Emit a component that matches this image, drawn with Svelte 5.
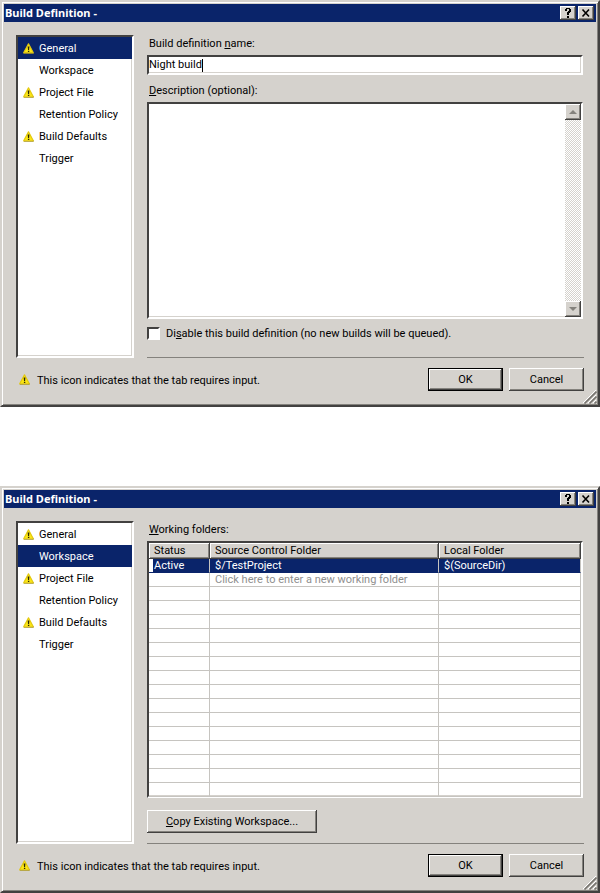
<script lang="ts">
  const tabs = [
    { name: 'General', warn: true },
    { name: 'Workspace', warn: false },
    { name: 'Project File', warn: true },
    { name: 'Retention Policy', warn: false },
    { name: 'Build Defaults', warn: true },
    { name: 'Trigger', warn: false },
  ]

  // The grid always shows empty rows below the last folder
  const blankRows = 15

  let name = $state('Night build')
  let description = $state('')
  let disabled = $state(false)
</script>

{#snippet warnIcon()}
  <svg class="warn" viewBox="0 0 11 11" width="11" height="11" aria-hidden="true">
    <path d="M5.5 0.8 L10.3 9.8 H0.7 Z" fill="#fbe714" stroke="#e3c810" stroke-width="1.2" stroke-linejoin="round" />
    <path d="M0.8 10.5 H10.4 L10.7 9.4" fill="none" stroke="#a08e2c" stroke-width="0.6" />
    <path d="M4.7 3.4 H6.4 L6.1 7 H5 Z M4.9 7.8 H6.3 V9.1 H4.9 Z" fill="#2b2606" />
  </svg>
{/snippet}

{#snippet dialog(selected, body)}
  <section class="dialog">
    <header class="titlebar">
      <h1>Build Definition -</h1>
      <button class="caption" aria-label="Help">
        <svg viewBox="0 0 12 10" width="12" height="10" shape-rendering="crispEdges">
          <path d="M4 0h4v1h1v3h-1v1h-1v2h-2v-3h1v-1h1v-2h-2v2h-2v-2h1z M5 8h2v2h-2z" />
        </svg>
      </button>
      <button class="caption" aria-label="Close">
        <svg viewBox="0 0 12 10" width="12" height="10">
          <path d="M2.5 1.5 L9 8.5 M9 1.5 L2.5 8.5" stroke="#000" stroke-width="1.6" />
        </svg>
      </button>
    </header>

    <div class="content">
      <ul class="tabs">
        {#each tabs as tab}
          <li>
            <button class="tab" class:selected={tab.name === selected}>
              <span class="slot">{#if tab.warn}{@render warnIcon()}{/if}</span>
              <span class="tab-name">{tab.name}</span>
            </button>
          </li>
        {/each}
      </ul>
      <div class="pane">
        {@render body()}
      </div>
    </div>

    <footer>
      <p class="note">
        {@render warnIcon()}
        <span>This icon indicates that the tab requires input.</span>
      </p>
      <button class="push default">OK</button>
      <button class="push">Cancel</button>
    </footer>

    <svg class="grip" viewBox="0 0 14 14" width="14" height="14" aria-hidden="true">
      <path d="M0 13 L13 0 M5 13 L13 5 M10 13 L13 10" stroke="#fff" />
      <path d="M1.5 13.5 L13.5 1.5 M6.5 13.5 L13.5 6.5 M11.5 13.5 L13.5 11.5" stroke="#77746f" stroke-width="1.6" />
    </svg>
  </section>
{/snippet}

{#snippet general()}
  <label class="caption-text" for="def-name">Build definition <u>n</u>ame:</label>
  <div class="sunken field">
    <input id="def-name" type="text" size="9" bind:value={name} />
    <span class="caret"></span>
  </div>

  <label class="caption-text desc-label" for="def-desc"><u>D</u>escription (optional):</label>
  <div class="sunken memo">
    <textarea id="def-desc" bind:value={description}></textarea>
    <div class="scrollbar">
      <button aria-label="Scroll up">
        <svg viewBox="0 0 8 4" width="8" height="4"><path d="M4 0 L8 4 H0 Z" /></svg>
      </button>
      <button aria-label="Scroll down">
        <svg viewBox="0 0 8 4" width="8" height="4"><path d="M0 0 H8 L4 4 Z" /></svg>
      </button>
    </div>
  </div>

  <label class="check">
    <input type="checkbox" bind:checked={disabled} />
    <span>Di<u>s</u>able this build definition (no new builds will be queued).</span>
  </label>
{/snippet}

{#snippet workspace()}
  <div class="caption-text" id="folders-label"><u>W</u>orking folders:</div>
  <div class="sunken grid">
    <table aria-labelledby="folders-label">
      <thead>
        <tr>
          <th class="status">Status</th>
          <th class="source">Source Control Folder</th>
          <th>Local Folder</th>
        </tr>
      </thead>
      <tbody>
        <tr class="current">
          <td>Active</td>
          <td>$/TestProject</td>
          <td>$(SourceDir)</td>
        </tr>
        <tr class="hint">
          <td></td>
          <td>Click here to enter a new working folder</td>
          <td></td>
        </tr>
        {#each { length: blankRows } as _}
          <tr><td></td><td></td><td></td></tr>
        {/each}
      </tbody>
    </table>
  </div>
  <button class="push copy"><span><u>C</u>opy Existing Workspace...</span></button>
{/snippet}

<main>
  {@render dialog('General', general)}
  {@render dialog('Workspace', workspace)}
</main>

<style>
  :global(body) {
    margin: 0;
    background: #fff;
  }

  main {
    --face: #d5d2cd;
    --navy: #0a246a;
    --shadow: #84827d;
    --dark: #424140;
    display: flex;
    flex-direction: column;
    gap: 79px;
    font-family: Tahoma, Roboto, "DejaVu Sans", sans-serif;
    font-size: 11px;
    line-height: 14px;
    color: #000;
  }

  button,
  input,
  textarea {
    font: inherit;
    color: inherit;
    margin: 0;
    padding: 0;
    border: none;
    border-radius: 0;
    outline: none;
  }

  u {
    text-underline-offset: 1px;
    text-decoration-thickness: 1px;
    text-decoration-skip-ink: none;
  }

  .dialog {
    position: relative;
    box-sizing: border-box;
    padding: 2px;
    border: 2px solid;
    border-color: var(--face) var(--dark) var(--dark) var(--face);
    background: var(--face);
    box-shadow: inset 1px 1px #fff, inset -1px -1px var(--shadow);
  }

  .titlebar {
    display: flex;
    align-items: center;
    gap: 2px;
    height: 18px;
    padding: 0 2px 0 1px;
    background: var(--navy);
    color: #fff;
  }

  h1 {
    flex: 1;
    margin: 0;
    font-family: Tahoma, "Noto Sans", "DejaVu Sans", sans-serif;
    font-size: 11px;
    font-weight: bold;
  }

  .caption,
  .scrollbar button {
    display: flex;
    align-items: center;
    justify-content: center;
    box-sizing: border-box;
    width: 16px;
    height: 14px;
    background: var(--face);
    box-shadow: inset -1px -1px var(--dark), inset 1px 1px #fff, inset -2px -2px var(--shadow);
  }

  .content {
    display: flex;
    gap: 13px;
    padding: 13px 12px 0;
  }

  .tabs {
    box-sizing: border-box;
    flex: none;
    width: 118px;
    height: 323px;
    margin: 0;
    padding: 0;
    list-style: none;
    background: #fff;
  }

  .tabs,
  .sunken {
    border: 2px solid;
    border-color: var(--dark) #fff #fff var(--dark);
    box-shadow: inset -1px -1px var(--face);
  }

  .tab {
    display: flex;
    align-items: center;
    width: 100%;
    height: 22px;
    background: transparent;
    text-align: left;
    white-space: nowrap;
  }

  .tab.selected {
    background: var(--navy);
    color: #fff;
  }

  .tab-name,
  .check span,
  .note span {
    padding-top: 2px;
  }

  .slot {
    display: flex;
    justify-content: center;
    width: 21px;
  }

  .warn {
    display: block;
    flex: none;
  }

  .pane {
    display: flex;
    flex-direction: column;
    flex: 1;
    min-width: 0;
    border-bottom: 1px solid var(--shadow);
  }

  .caption-text {
    margin: 2px 0 4px 2px;
  }

  .sunken {
    box-sizing: border-box;
    margin-right: 1px;
    background: #fff;
  }

  .field {
    display: flex;
    align-items: center;
    height: 20px;
  }

  .field input {
    field-sizing: content;
    background: transparent;
  }

  .caret {
    width: 1px;
    height: 13px;
    background: #000;
  }

  .desc-label {
    margin-top: 9px;
  }

  .memo {
    display: flex;
    height: 217px;
  }

  textarea {
    flex: 1;
    min-width: 0;
    resize: none;
    background: transparent;
    overflow: hidden;
  }

  .scrollbar {
    display: flex;
    flex-direction: column;
    justify-content: space-between;
    width: 16px;
    background: repeating-conic-gradient(#fff 0 25%, var(--face) 0 50%) 0 0 / 2px 2px;
  }

  .scrollbar button {
    height: 16px;
  }

  .scrollbar path {
    fill: var(--shadow);
  }

  .check {
    display: flex;
    align-items: center;
    gap: 6px;
    margin-top: 6px;
  }

  .check input {
    appearance: none;
    box-sizing: border-box;
    width: 13px;
    height: 13px;
    border: 2px solid;
    border-color: var(--dark) #fff #fff var(--dark);
    background: #fff;
  }

  .check input:checked {
    background: radial-gradient(#000 50%, #fff 55%);
  }

  .grid {
    height: 257px;
  }

  table {
    width: 100%;
    table-layout: fixed;
    border-collapse: separate;
    border-spacing: 0;
  }

  th,
  td {
    box-sizing: border-box;
    height: 14px;
    padding: 0 0 0 5px;
    border-right: 1px solid #c6c4c0;
    border-bottom: 1px solid #c6c4c0;
    font-weight: normal;
    line-height: 13px;
    text-align: left;
    white-space: nowrap;
  }

  th {
    height: 16px;
    border-color: var(--dark);
    background: var(--face);
    box-shadow: inset 1px 1px #fff, inset -1px -1px var(--shadow);
  }

  .status {
    width: 61px;
  }

  .source {
    width: 53%;
  }

  .current td {
    border-bottom-color: var(--navy);
    background: var(--navy);
    color: #fff;
  }

  /* row header edge stays white beside the selection */
  .current td:first-child {
    box-shadow: inset 4px 0 #fff;
  }

  .hint td {
    color: #8f8f8f;
  }

  .push {
    box-sizing: border-box;
    width: 75px;
    height: 23px;
    padding-top: 1px;
    background: var(--face);
    box-shadow: inset -1px -1px var(--dark), inset 1px 1px #fff, inset -2px -2px var(--shadow);
  }

  .push.default {
    border: 1px solid #000;
  }

  .copy {
    width: 170px;
    margin-top: 12px;
  }

  footer {
    display: flex;
    align-items: center;
    gap: 6px;
    padding: 10px 12px 12px 15px;
  }

  .note {
    display: flex;
    align-items: center;
    gap: 7px;
    flex: 1;
    margin: 0;
  }

  .grip {
    position: absolute;
    right: 1px;
    bottom: 1px;
  }
</style>
